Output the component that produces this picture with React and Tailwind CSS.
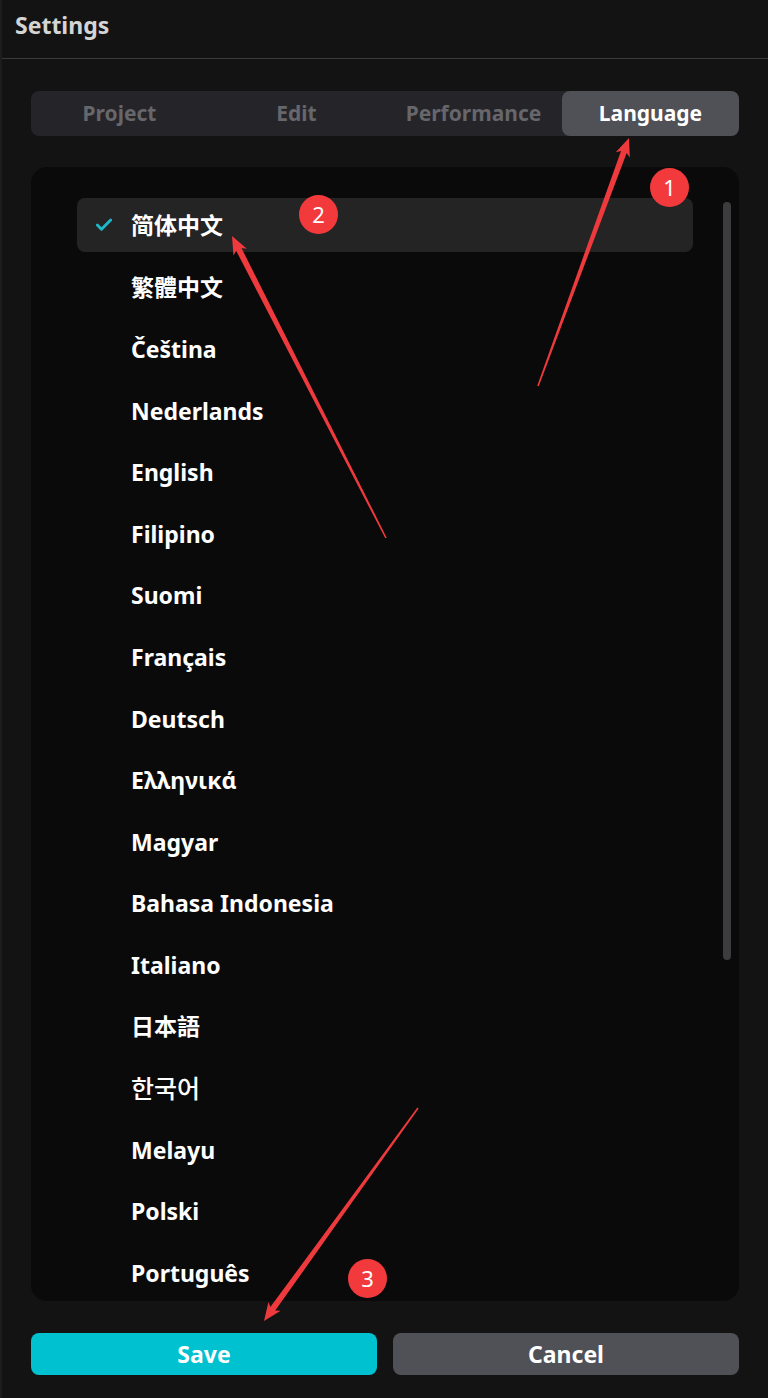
import { Check } from "lucide-react";

const languages = [
  "简体中文",
  "繁體中文",
  "Čeština",
  "Nederlands",
  "English",
  "Filipino",
  "Suomi",
  "Français",
  "Deutsch",
  "Ελληνικά",
  "Magyar",
  "Bahasa Indonesia",
  "Italiano",
  "日本語",
  "한국어",
  "Melayu",
  "Polski",
  "Português",
];

const tabs = ["Project", "Edit", "Performance", "Language"];

// tapered annotation arrow, thin at the tail and wide at the tip
function arrowPoints(x1, y1, x2, y2) {
  const len = Math.hypot(x2 - x1, y2 - y1);
  const ux = (x2 - x1) / len;
  const uy = (y2 - y1) / len;
  const nx = -uy;
  const ny = ux;
  const at = (back, side) =>
    `${x2 - ux * back + nx * side},${y2 - uy * back + ny * side}`;
  return [
    at(len, 0.8),
    at(15, 3),
    at(18, 7.5),
    `${x2},${y2}`,
    at(18, -7.5),
    at(15, -3),
    at(len, -0.8),
  ].join(" ");
}

function Badge({ className, children }) {
  return (
    <div
      className={`absolute flex h-[39px] w-[39px] items-center justify-center rounded-full bg-[#f23a3c] text-[22px] text-white ${className}`}
    >
      {children}
    </div>
  );
}

export default function App() {
  return (
    <div className="relative h-[1398px] w-[768px] overflow-hidden border-l-2 border-[#1c1c1c] bg-[#131314] font-['Noto_Sans','Noto_Sans_CJK_SC',sans-serif]">
      <div className="flex h-[59px] items-center border-b border-[#3a3a3b] pb-[8px] pl-[13px]">
        <h1 className="text-[23px] font-bold text-[#d4d4d4]">Settings</h1>
      </div>

      <div className="ml-[29px] mt-[32px] grid h-[45px] w-[708px] grid-cols-4 rounded-lg bg-[#242429]">
        {tabs.map((tab) => (
          <div
            key={tab}
            className={`flex items-center justify-center rounded-lg text-[21px] font-bold ${
              tab === "Language"
                ? "bg-[#505057] text-white"
                : "text-[#66666b]"
            }`}
          >
            {tab}
          </div>
        ))}
      </div>

      <div className="relative ml-[29px] mt-[31px] h-[1134px] w-[708px] overflow-hidden rounded-2xl bg-[#0a0a0b] pl-[46px] pt-[31px]">
        <div className="flex w-[616px] flex-col gap-[7.6px]">
          {languages.map((lang, i) => (
            <div
              key={lang}
              className={`flex h-[54px] shrink-0 items-center rounded-lg pl-[17px] text-white ${
                lang === "한국어" ? "text-[25px] font-medium" : "text-[23px] font-bold"
              } ${i === 0 ? "bg-[#242425]" : ""}`}
            >
              <span className="flex w-[37px] shrink-0 items-center">
                {i === 0 && (
                  <Check className="h-[20px] w-[20px] text-[#1fb6c6]" strokeWidth={3.5} />
                )}
              </span>
              <span className={i === 0 ? "" : "pt-[2px]"}>{lang}</span>
            </div>
          ))}
        </div>
        <div className="absolute left-[692px] top-[35px] h-[758px] w-[8px] rounded-full bg-[#3c3c3e]" />
      </div>

      <div className="ml-[29px] mt-[32px] flex w-[708px] gap-[16px]">
        <button className="h-[42px] flex-1 rounded-lg bg-[#00c1d0] text-[23px] font-bold text-white">
          Save
        </button>
        <button className="h-[42px] flex-1 rounded-lg bg-[#505057] text-[23px] font-bold text-white">
          Cancel
        </button>
      </div>

      <svg className="absolute -left-[2px] top-0" width="768" height="1398">
        <polygon points={arrowPoints(538, 386, 629, 138)} fill="#ef3a3d" />
        <polygon points={arrowPoints(386, 538, 232, 236)} fill="#ef3a3d" />
        <polygon points={arrowPoints(418, 1108, 264, 1321)} fill="#ef3a3d" />
      </svg>

      <Badge className="left-[648px] top-[168px]">1</Badge>
      <Badge className="left-[297px] top-[195px]">2</Badge>
      <Badge className="left-[346px] top-[1259px]">3</Badge>
    </div>
  );
}
